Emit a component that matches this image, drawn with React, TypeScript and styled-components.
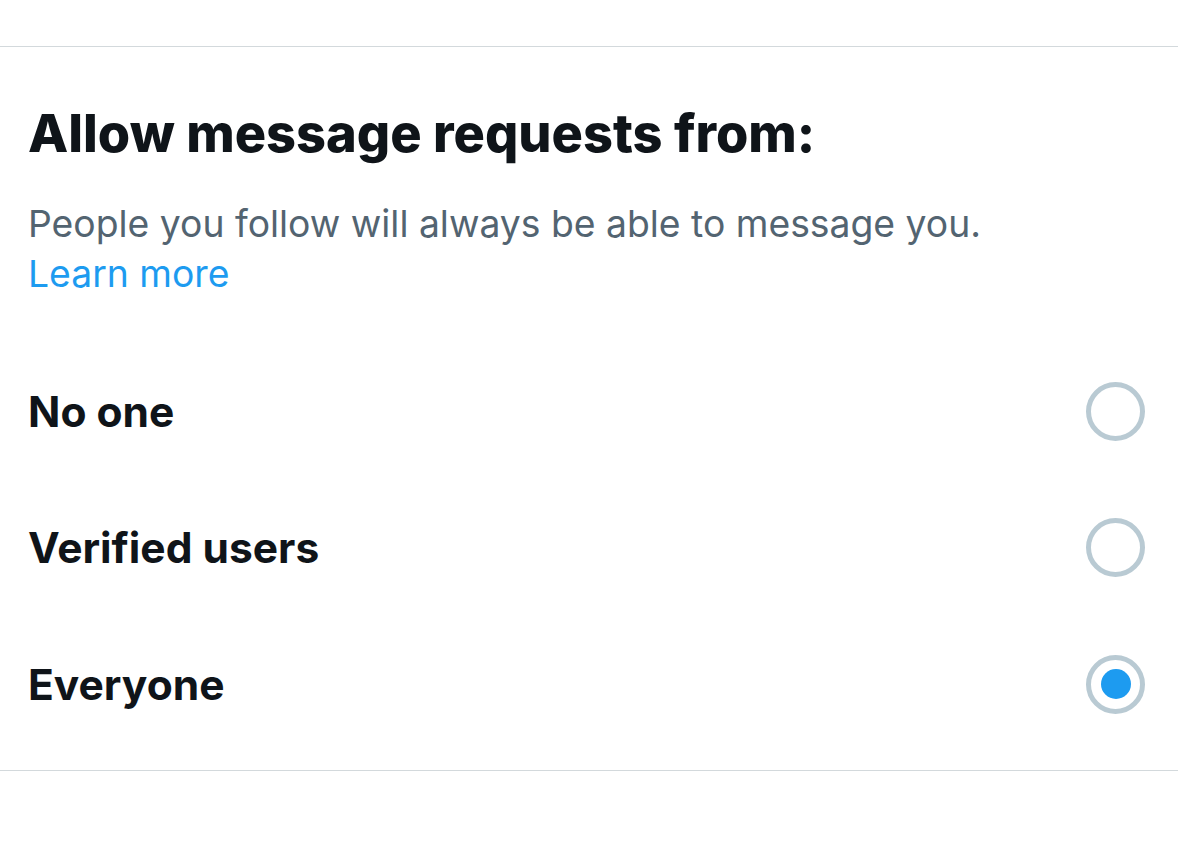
import styled, { createGlobalStyle } from "styled-components";

const Global = createGlobalStyle`
  html, body { margin: 0; padding: 0; background: #fff; }
  body { font-family: Inter, "Liberation Sans", Arial, sans-serif; color: #0f1419; }
`;

const Page = styled.div`
  width: 1178px;
  height: 867px;
  background: #fff;
  overflow: hidden;
`;

const Divider = styled.div<{ $top: number }>`
  margin-top: ${(p) => p.$top}px;
  height: 1px;
  background: #d3d9dc;
`;

const Header = styled.div`
  padding: 58px 28px 0;
`;

const Title = styled.h1`
  margin: 0;
  font-size: 52.3px;
  line-height: 56px;
  font-weight: 800;
  color: #0f1419;
`;

const Description = styled.p`
  margin: 38px 0 0;
  font-size: 37.3px;
  line-height: 50px;
  color: #536471;
`;

const Link = styled.a`
  color: #1d9bf0;
  text-decoration: none;
`;

const Options = styled.div`
  margin-top: 44px;
  display: flex;
  flex-direction: column;
`;

const Row = styled.label`
  height: 136.5px;
  display: flex;
  align-items: center;
  justify-content: space-between;
  padding: 0 33px 0 28px;
  font-size: 42.5px;
  font-weight: 700;
  color: #0f1419;
`;

const Radio = styled.span<{ $checked: boolean }>`
  width: 59px;
  height: 59px;
  box-sizing: border-box;
  border: 5px solid #b9cad3;
  border-radius: 50%;
  display: flex;
  align-items: center;
  justify-content: center;

  &::after {
    content: "";
    display: ${(p) => (p.$checked ? "block" : "none")};
    width: 30px;
    height: 30px;
    border-radius: 50%;
    background: #1d9bf0;
  }
`;

const options = [
  { label: "No one", checked: false },
  { label: "Verified users", checked: false },
  { label: "Everyone", checked: true },
];

export default function App() {
  return (
    <Page>
      <Global />
      <Divider $top={46} />
      <Header>
        <Title>Allow message requests from:</Title>
        <Description>
          People you follow will always be able to message you.
          <br />
          <Link href="#">Learn more</Link>
        </Description>
      </Header>
      <Options>
        {options.map((o) => (
          <Row key={o.label}>
            {o.label}
            <Radio $checked={o.checked} />
          </Row>
        ))}
      </Options>
      <Divider $top={17} />
    </Page>
  );
}
